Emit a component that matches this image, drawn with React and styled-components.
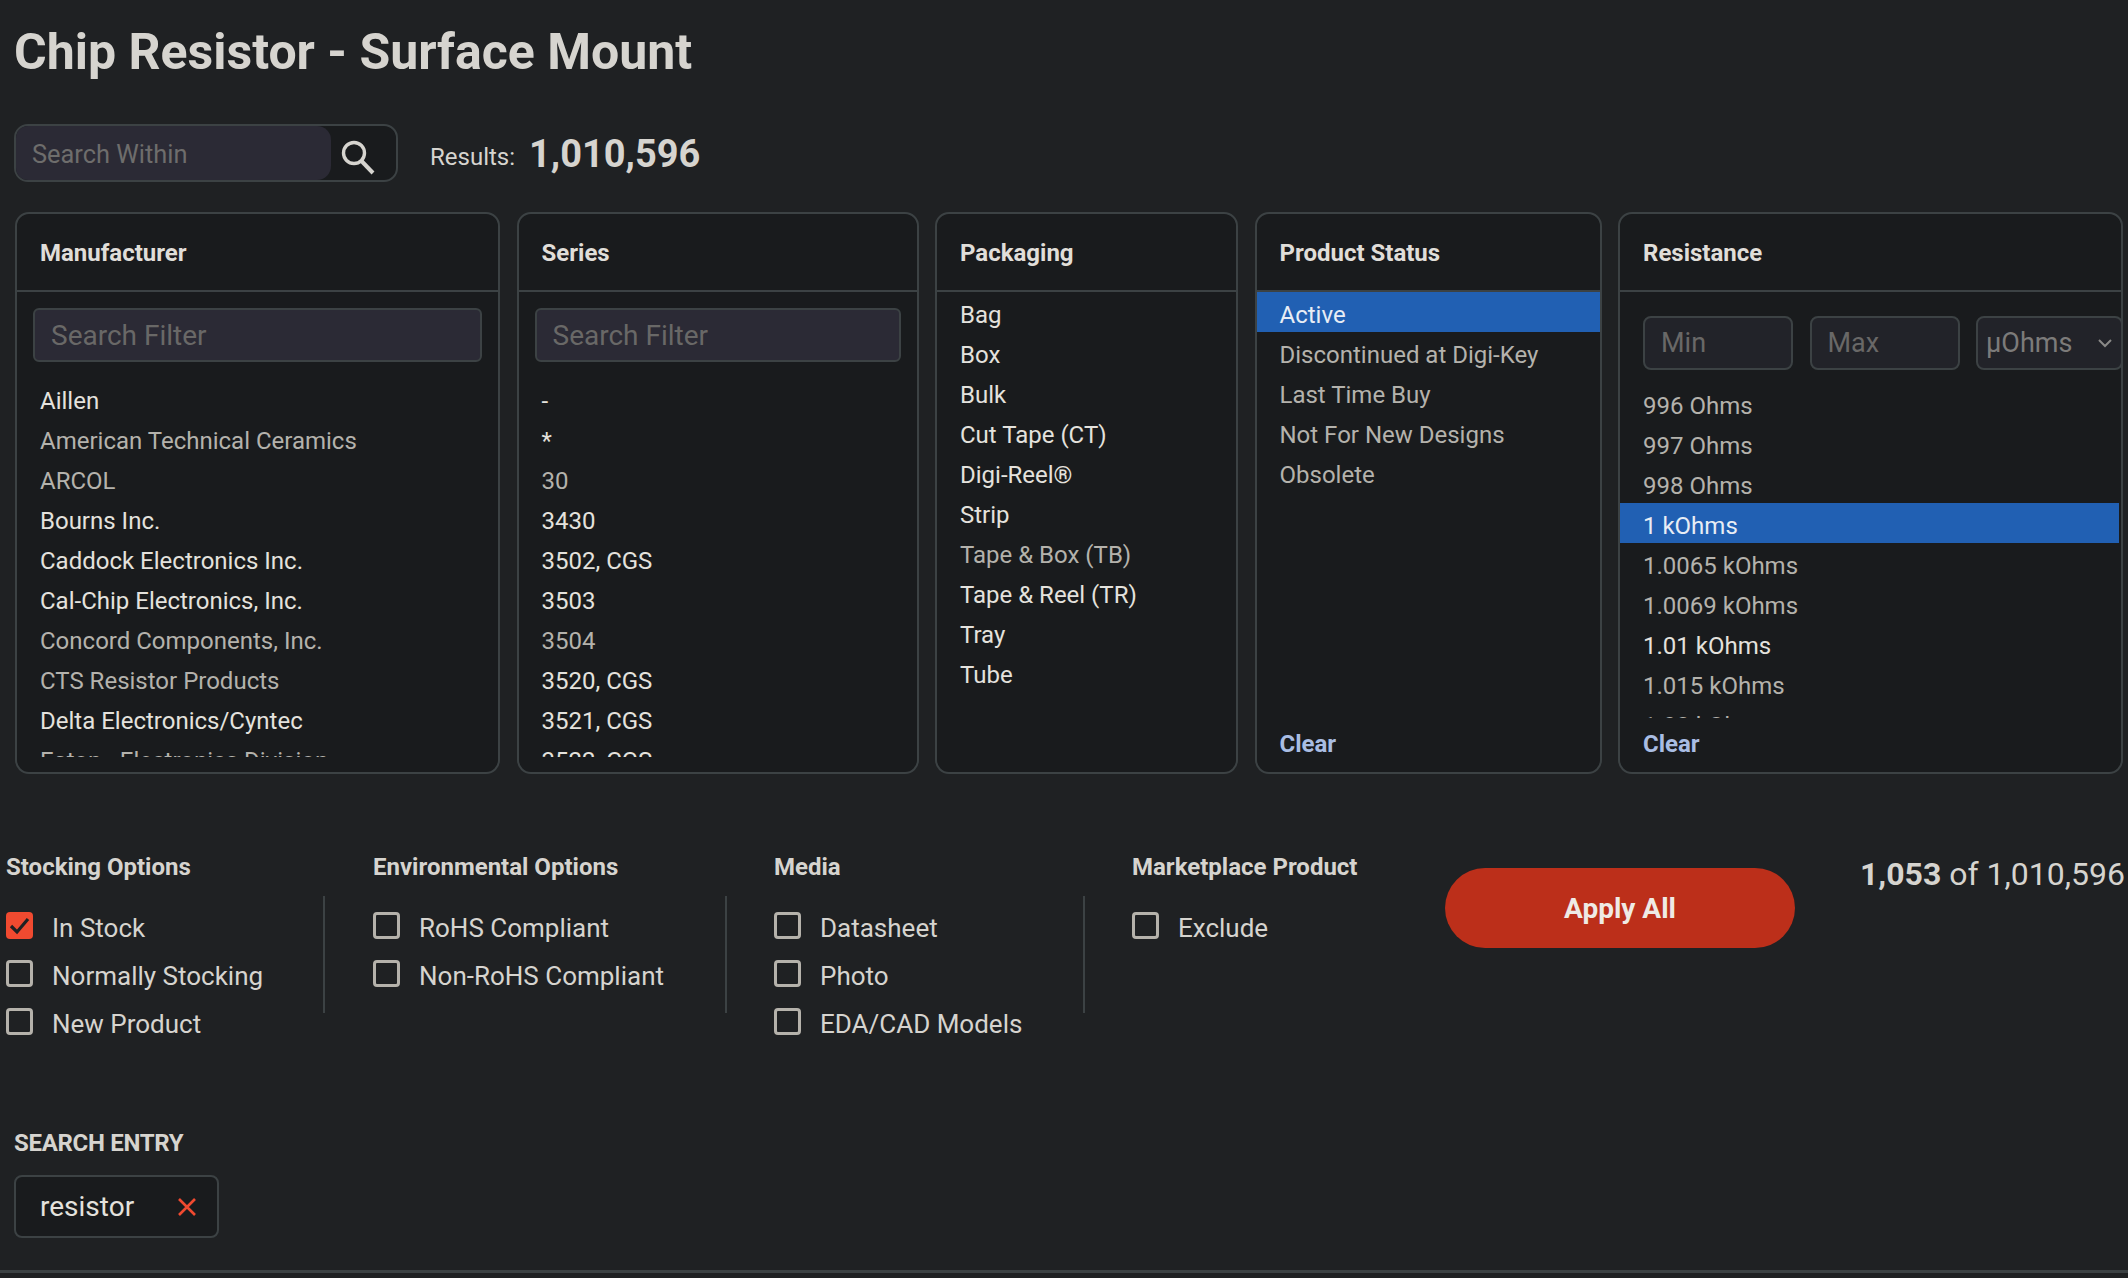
import React from "react";
import styled, { createGlobalStyle } from "styled-components";

const Global = createGlobalStyle`
  html, body { margin: 0; padding: 0; background: #1f2123; }
  body { font-family: Roboto, "Liberation Sans", sans-serif; color: #e4e2dd; }
  * { box-sizing: border-box; }
  #root { width: 2128px; height: 1278px; overflow: hidden; }
`;

const Page = styled.div`
  width: 2128px;
  height: 1278px;
  padding: 0 6px 0 14px;
  display: flex;
  flex-direction: column;
`;
const Title = styled.h1`
  margin: 0;
  height: 124px;
  padding-top: 21px;
  font-size: 50px;
  line-height: 62px;
  font-weight: 700;
  color: #d6d4cf;
`;
const TopBar = styled.div`
  display: flex;
  align-items: center;
  height: 58px;
  margin-bottom: 30px;
`;
const SearchBox = styled.div`
  width: 384px;
  height: 58px;
  display: flex;
  background: #191b1d;
  border: 2px solid #3c4244;
  border-radius: 14px;
  overflow: hidden;
`;
const SearchInput = styled.input`
  width: 315px;
  height: 100%;
  border: 0;
  outline: 0;
  padding: 1px 16px 0;
  background: #2b2a35;
  border-radius: 0 14px 14px 0;
  font: 400 25.4px Roboto, sans-serif;
  color: #e4e2dd;
  &::placeholder { color: #6e6d6c; opacity: 1; }
`;
const SearchBtn = styled.div`
  flex: 1;
  display: flex;
  align-items: center;
  padding: 7px 0 0 8px;
`;
const ResultsLabel = styled.span`
  margin-left: 32px;
  margin-top: 8px;
  font-size: 24px;
  color: #d6d4cf;
`;
const ResultsValue = styled.span`
  margin: 1px 0 0 14px;
  font-size: 38px;
  font-weight: 700;
  color: #d6d4cf;
`;
const Panels = styled.div`
  display: grid;
  grid-template-columns: 485px 402px 303px 347px 505px;
  column-gap: 16.5px;
  height: 562px;
  margin-left: 1px;
`;
const Panel = styled.section`
  background: #191b1d;
  border: 2px solid #3c4244;
  border-radius: 14px;
  display: flex;
  flex-direction: column;
  overflow: hidden;
`;
const PanelHead = styled.div`
  height: 78px;
  flex: none;
  padding: 1px 0 0 23px;
  display: flex;
  align-items: center;
  border-bottom: 2px solid #3c4244;
  font-size: 24px;
  font-weight: 700;
  color: #e0ded9;
`;
const FilterInput = styled.input`
  display: block;
  flex: none;
  height: 54px;
  margin: 16px 16px 0;
  width: calc(100% - 32px);
  border: 2px solid #3c4244;
  border-radius: 6px;
  outline: 0;
  padding: 0 16px;
  background: #2b2a35;
  font: 400 28px Roboto, sans-serif;
  &::placeholder { color: #696867; opacity: 1; }
`;
const RowList = styled.div`
  flex: ${(p) => (p.$fill ? 1 : "none")};
  height: ${(p) => p.$h || "auto"};
  margin-top: ${(p) => p.$top || "0"};
  overflow: hidden;
`;
const Row = styled.div`
  height: 40px;
  padding: 6px 0 0 23px;
  line-height: 34px;
  font-size: 24px;
  white-space: nowrap;
  margin-right: ${(p) => (p.$gutter ? "2px" : "0")};
  background: ${(p) => (p.$on ? "#2160b3" : "transparent")};
  color: ${(p) => (p.$on ? "#e8edf5" : p.$dim ? "#b4b2ac" : "#e4e2dd")};
`;
const ClearLink = styled.div`
  flex: none;
  height: 44px;
  padding-left: 23px;
  margin: 4px 0 6px;
  line-height: 44px;
  font-size: 24px;
  font-weight: 700;
  color: #a9bde3;
`;
const RangeRow = styled.div`
  flex: none;
  display: grid;
  grid-template-columns: 150px 150px 147px;
  column-gap: 16.5px;
  padding: 24px 0 0 23px;
`;
const RangeInput = styled.input`
  width: 100%;
  height: 54px;
  border: 2px solid #3c4244;
  border-radius: 8px;
  outline: 0;
  padding: 0 16px;
  background: #222329;
  font: 400 27px Roboto, sans-serif;
  &::placeholder { color: #696867; opacity: 1; }
`;
const UnitSelect = styled.div`
  height: 54px;
  border: 2px solid #3c4244;
  border-radius: 8px;
  background: #222329;
  padding: 0 8px;
  display: flex;
  align-items: center;
  justify-content: space-between;
  font-size: 27px;
  color: #7c7b7a;
`;
const Options = styled.div`
  display: flex;
  margin: 59px 0 0 -8px;
  height: 262px;
  flex: none;
`;
const Group = styled.div`
  width: ${(p) => p.$w};
  flex: none;
`;
const GroupTitle = styled.div`
  height: 36px;
  line-height: 36px;
  margin-top: 16px;
  font-size: 24px;
  font-weight: 700;
  color: #d6d4cf;
`;
const GroupBody = styled.div`
  margin-top: 16px;
  display: flex;
  flex-direction: column;
`;
const Divider = styled.div`
  width: 2px;
  height: 117px;
  margin-top: 63px;
  margin-right: ${(p) => p.$r};
  background: #3c4244;
  flex: none;
`;
const CheckRow = styled.label`
  display: flex;
  align-items: center;
  height: 48px;
  flex: none;
  font-size: 26px;
  color: #d6d4cf;
`;
const CheckText = styled.span`
  padding-top: 5px;
`;
const Box = styled.span`
  width: 27px;
  height: 27px;
  flex: none;
  margin-right: 19px;
  border: ${(p) => (p.$on ? "0" : "3px solid #b5b2ab")};
  border-radius: 4px;
  background: ${(p) => (p.$on ? "#f04a30" : "transparent")};
  display: flex;
  align-items: center;
  justify-content: center;
`;
const ApplyBtn = styled.button`
  width: 350px;
  flex: none;
  height: 80px;
  margin: 35px 0 0 0;
  border: 0;
  border-radius: 40px;
  background: #bc2f1a;
  color: #efeae5;
  font: 700 28px Roboto, sans-serif;
`;
const Count = styled.div`
  margin: 19px 0 0 65px;
  font-size: 32px;
  line-height: 44px;
  color: #d6d4cf;
  white-space: nowrap;
  flex: none;
  b { font-weight: 700; }
`;
const EntryLabel = styled.div`
  height: 36px;
  line-height: 36px;
  margin-top: 30px;
  font-size: 24px;
  font-weight: 700;
  letter-spacing: -0.3px;
  color: #d6d4cf;
`;
const Chip = styled.div`
  width: 205px;
  height: 63px;
  margin-top: 14px;
  padding: 0 20px 0 24px;
  background: #191b1d;
  border: 2px solid #3c4244;
  border-radius: 8px;
  display: flex;
  align-items: center;
  justify-content: space-between;
  font-size: 28px;
  color: #e4e2dd;
`;
const BottomRule = styled.div`
  height: 3px;
  background: #3c4244;
  margin: 32px -6px 0 -14px;
  flex: none;
`;

const SearchIcon = () => (
  <svg width="38" height="38" viewBox="0 0 38 38" fill="none" stroke="#d6d4cf">
    <circle cx="15" cy="15" r="10.5" strokeWidth="3.4" />
    <path d="M22.5 23 L34 35" strokeWidth="4" />
  </svg>
);
const Check = () => (
  <svg width="21" height="19" viewBox="0 0 21 19" fill="none" stroke="#1f2123" strokeWidth="3.2">
    <path d="M2 10 L8 16 L19 3" />
  </svg>
);
const Chevron = () => (
  <svg width="16" height="10" viewBox="0 0 16 10" fill="none" stroke="#8a8987" strokeWidth="2">
    <path d="M2 2 L8 8 L14 2" />
  </svg>
);
const Cross = () => (
  <svg width="20" height="20" viewBox="0 0 20 20" fill="none" stroke="#f04a30" strokeWidth="2.6">
    <path d="M2 2 L18 18 M18 2 L2 18" />
  </svg>
);

const Rows = ({ items, gutter }) =>
  items.map(([t, dim, on]) => (
    <Row key={t} $dim={dim} $on={on} $gutter={gutter}>{t}</Row>
  ));

const makers = [["Aillen"], ["American Technical Ceramics", 1], ["ARCOL", 1], ["Bourns Inc."], ["Caddock Electronics Inc."], ["Cal-Chip Electronics, Inc."], ["Concord Components, Inc.", 1], ["CTS Resistor Products", 1], ["Delta Electronics/Cyntec"], ["Eaton - Electronics Division", 1]];
const series = [["-"], ["*"], ["30", 1], ["3430"], ["3502, CGS"], ["3503"], ["3504", 1], ["3520, CGS"], ["3521, CGS"], ["3522, CGS"]];
const packaging = [["Bag"], ["Box"], ["Bulk"], ["Cut Tape (CT)"], ["Digi-Reel®"], ["Strip"], ["Tape & Box (TB)", 1], ["Tape & Reel (TR)"], ["Tray"], ["Tube"]];
const statuses = [["Active", 0, 1], ["Discontinued at Digi-Key", 1], ["Last Time Buy", 1], ["Not For New Designs", 1], ["Obsolete", 1]];
const resist = [["996 Ohms", 1], ["997 Ohms", 1], ["998 Ohms", 1], ["1 kOhms", 0, 1], ["1.0065 kOhms", 1], ["1.0069 kOhms", 1], ["1.01 kOhms"], ["1.015 kOhms", 1], ["1.02 kOhms", 1]];

const Checks = ({ items }) =>
  items.map(([t, on]) => (
    <CheckRow key={t}>
      <Box $on={on}>{on && <Check />}</Box>
      <CheckText>{t}</CheckText>
    </CheckRow>
  ));

export default function App() {
  return (
    <Page>
      <Global />
      <Title>Chip Resistor - Surface Mount</Title>
      <TopBar>
        <SearchBox>
          <SearchInput placeholder="Search Within" />
          <SearchBtn><SearchIcon /></SearchBtn>
        </SearchBox>
        <ResultsLabel>Results:</ResultsLabel>
        <ResultsValue>1,010,596</ResultsValue>
      </TopBar>
      <Panels>
        <Panel>
          <PanelHead>Manufacturer</PanelHead>
          <FilterInput placeholder="Search Filter" />
          <RowList $top="16px" $h="379px"><Rows items={makers} /></RowList>
        </Panel>
        <Panel>
          <PanelHead>Series</PanelHead>
          <FilterInput placeholder="Search Filter" />
          <RowList $top="16px" $h="379px"><Rows items={series} /></RowList>
        </Panel>
        <Panel>
          <PanelHead>Packaging</PanelHead>
          <RowList $fill><Rows items={packaging} /></RowList>
        </Panel>
        <Panel>
          <PanelHead>Product Status</PanelHead>
          <RowList $fill><Rows items={statuses} /></RowList>
          <ClearLink>Clear</ClearLink>
        </Panel>
        <Panel>
          <PanelHead>Resistance</PanelHead>
          <RangeRow>
            <RangeInput placeholder="Min" />
            <RangeInput placeholder="Max" />
            <UnitSelect>µOhms<Chevron /></UnitSelect>
          </RangeRow>
          <RowList $top="13px" $fill><Rows items={resist} gutter /></RowList>
          <ClearLink>Clear</ClearLink>
        </Panel>
      </Panels>
      <Options>
        <Group $w="317px">
          <GroupTitle>Stocking Options</GroupTitle>
          <GroupBody><Checks items={[["In Stock", 1], ["Normally Stocking"], ["New Product"]]} /></GroupBody>
        </Group>
        <Divider $r="48px" />
        <Group $w="352px">
          <GroupTitle>Environmental Options</GroupTitle>
          <GroupBody><Checks items={[["RoHS Compliant"], ["Non-RoHS Compliant"]]} /></GroupBody>
        </Group>
        <Divider $r="47px" />
        <Group $w="309px">
          <GroupTitle>Media</GroupTitle>
          <GroupBody><Checks items={[["Datasheet"], ["Photo"], ["EDA/CAD Models"]]} /></GroupBody>
        </Group>
        <Divider $r="47px" />
        <Group $w="313px">
          <GroupTitle>Marketplace Product</GroupTitle>
          <GroupBody><Checks items={[["Exclude"]]} /></GroupBody>
        </Group>
        <ApplyBtn>Apply All</ApplyBtn>
        <Count><b>1,053</b> of 1,010,596</Count>
      </Options>
      <EntryLabel>SEARCH ENTRY</EntryLabel>
      <Chip>resistor<Cross /></Chip>
      <BottomRule />
    </Page>
  );
}
